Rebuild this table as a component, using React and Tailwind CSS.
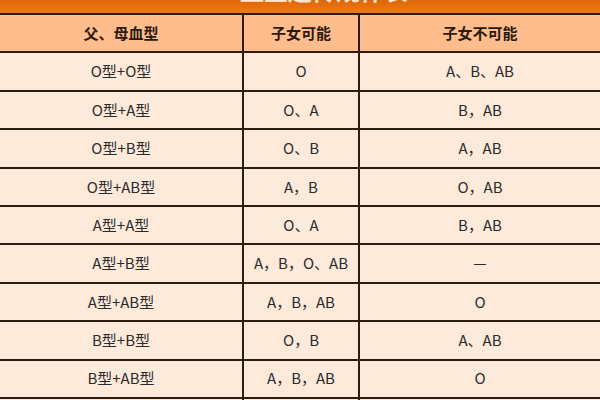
import React from 'react'

const rows = [
  ['O型+O型', 'O', 'A、B、AB'],
  ['O型+A型', 'O、A', 'B，AB'],
  ['O型+B型', 'O、B', 'A，AB'],
  ['O型+AB型', 'A，B', 'O，AB'],
  ['A型+A型', 'O、A', 'B，AB'],
  ['A型+B型', 'A，B，O、AB', '—'],
  ['A型+AB型', 'A，B，AB', 'O'],
  ['B型+B型', 'O，B', 'A、AB'],
  ['B型+AB型', 'A，B，AB', 'O'],
  ['AB型+AB型', 'A，B，AB', 'O'],
]

const Row = ({ cells, head }) => (
  <div
    className={
      'grid grid-cols-[242px_116px_242px] h-[38.4px] shrink-0 border-t-2 border-[#2e1c12] ' +
      (head ? 'bg-[#ffbc8c] font-bold text-[#2a1a10]' : 'bg-[#fdeadb] text-[#2b2b2b]')
    }
  >
    {cells.map((c, i) => (
      <div
        key={i}
        className={
          'flex items-center justify-center ' + (i > 0 ? 'border-l-2 border-[#2e1c12]' : '')
        }
      >
        {c}
      </div>
    ))}
  </div>
)

export default function App() {
  return (
    <div
      className="w-[600px] h-[400px] overflow-hidden flex flex-col text-[15px] bg-[#fdeadb]"
      style={{ fontFamily: '"Microsoft YaHei", "Noto Sans CJK SC", "Noto Sans", sans-serif' }}
    >
      <div className="h-[13px] shrink-0 bg-gradient-to-b from-[#e0650a] to-[#ec7a14] overflow-hidden relative">
        <div className="absolute left-[240px] top-[-22px] text-[24px] font-bold text-[#fde7c8] leading-none whitespace-nowrap">
          血型遗传规律表
        </div>
      </div>
      <Row head cells={['父、母血型', '子女可能', '子女不可能']} />
      {rows.map((r, i) => (
        <Row key={i} cells={r} />
      ))}
    </div>
  )
}
